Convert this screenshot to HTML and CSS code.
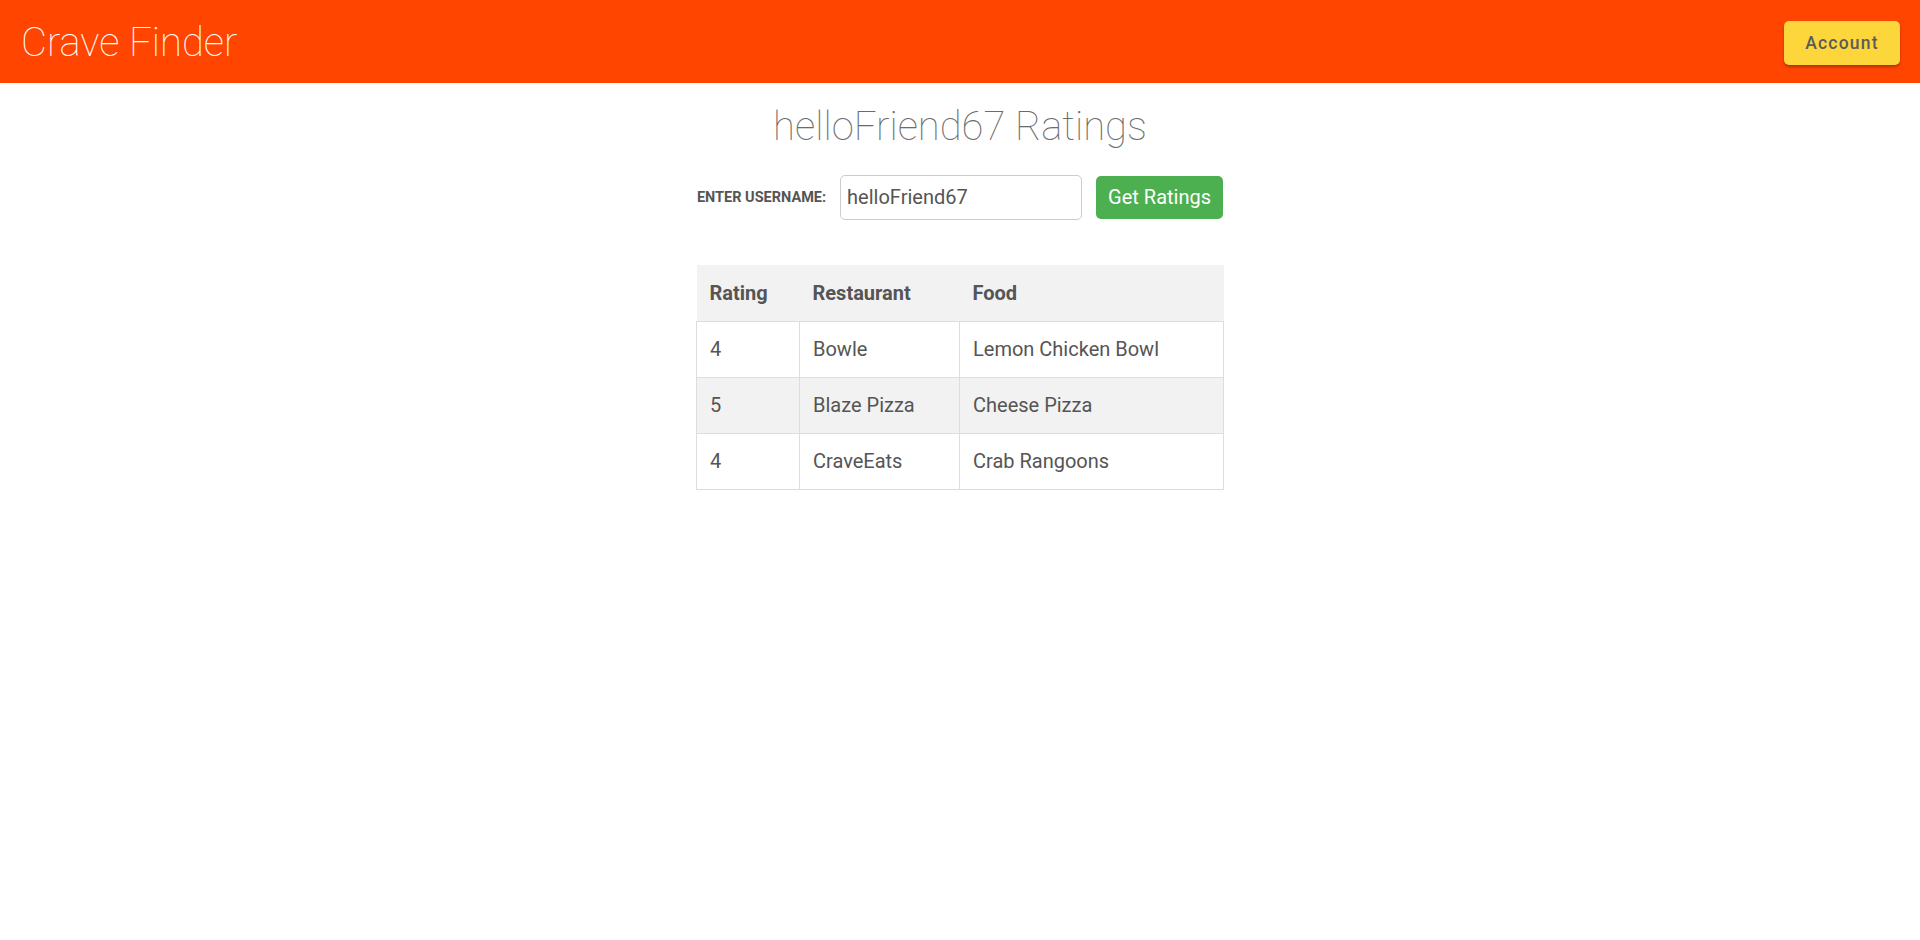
FILE: index.html
```html
<!DOCTYPE html>
<html lang="en">
<head>
<meta charset="utf-8">
<title>Crave Finder</title>
<link rel="stylesheet" href="styles.css">
</head>
<body>
<header class="topbar">
  <div class="brand">Crave Finder</div>
  <button class="account-btn">Account</button>
</header>
<main class="content">
  <h1 class="page-title">helloFriend67 Ratings</h1>
  <form class="search-row">
    <label class="search-label" for="username">ENTER USERNAME:</label>
    <input class="search-input" id="username" type="text" value="helloFriend67">
    <button class="search-btn" type="button">Get Ratings</button>
  </form>
  <table class="ratings">
    <colgroup>
      <col class="col-rating">
      <col class="col-restaurant">
      <col class="col-food">
    </colgroup>
    <thead>
      <tr><th>Rating</th><th>Restaurant</th><th>Food</th></tr>
    </thead>
    <tbody>
      <tr><td>4</td><td>Bowle</td><td>Lemon Chicken Bowl</td></tr>
      <tr><td>5</td><td>Blaze Pizza</td><td>Cheese Pizza</td></tr>
      <tr><td>4</td><td>CraveEats</td><td>Crab Rangoons</td></tr>
    </tbody>
  </table>
</main>
</body>
</html>
```
FILE: styles.css
```css
* { box-sizing: border-box; }
html, body {
  margin: 0;
  padding: 0;
  background: #ffffff;
  font-family: Roboto, "Liberation Sans", sans-serif;
}
.topbar {
  height: 83px;
  background: #ff4500;
  display: flex;
  align-items: center;
  justify-content: space-between;
  padding: 0 20px 0 20px;
}
.brand {
  color: #ffffff;
  font-weight: 100;
  font-size: 40px;
  line-height: 1;
  padding-left: 1px;
  margin-top: 2px;
}
.account-btn {
  width: 116px;
  height: 44px;
  background: #fdd63c;
  border: none;
  border-radius: 5px;
  color: #5b5b5b;
  font-family: Roboto, "Liberation Sans", sans-serif;
  font-weight: 500;
  font-size: 17.5px;
  letter-spacing: 1.2px;
  box-shadow: 0 2px 3px rgba(0,0,0,0.3);
  margin-top: 2px;
  padding: 0;
}
.content {
  display: flex;
  flex-direction: column;
  align-items: center;
}
.page-title {
  margin: 20px 0 0 0;
  font-weight: 100;
  font-size: 40px;
  line-height: 47px;
  color: #6b6b6b;
}
.search-row {
  margin: 25px 0 0 0;
  display: flex;
  align-items: center;
  gap: 14px;
  height: 44px;
}
.search-label {
  font-weight: 700;
  font-size: 14.5px;
  color: #555555;
  margin-top: 1px;
}
.search-input {
  width: 242px;
  height: 45px;
  border: 1px solid #cccccc;
  border-radius: 5px;
  padding: 0 6px;
  font-family: Roboto, "Liberation Sans", sans-serif;
  font-size: 20px;
  color: #555555;
  outline: none;
}
.search-btn {
  width: 127px;
  height: 43px;
  background: #4caf50;
  color: #ffffff;
  border: none;
  border-radius: 5px;
  font-family: Roboto, "Liberation Sans", sans-serif;
  font-size: 20px;
  padding: 0;
}
.ratings {
  margin-top: 46px;
  width: 527px;
  border-collapse: collapse;
  table-layout: fixed;
  color: #555555;
  font-size: 20px;
}
.col-rating { width: 103px; }
.col-restaurant { width: 160px; }
.col-food { width: 264px; }
.ratings th {
  background: #f2f2f2;
  text-align: left;
  font-weight: 700;
  height: 56px;
  padding: 0 13px;
  border-bottom: 1px solid #dddddd;
}
.ratings td {
  height: 56px;
  padding: 0 13px;
  border: 1px solid #dddddd;
}
.ratings tbody tr:nth-child(even) td {
  background: #f2f2f2;
}
```
